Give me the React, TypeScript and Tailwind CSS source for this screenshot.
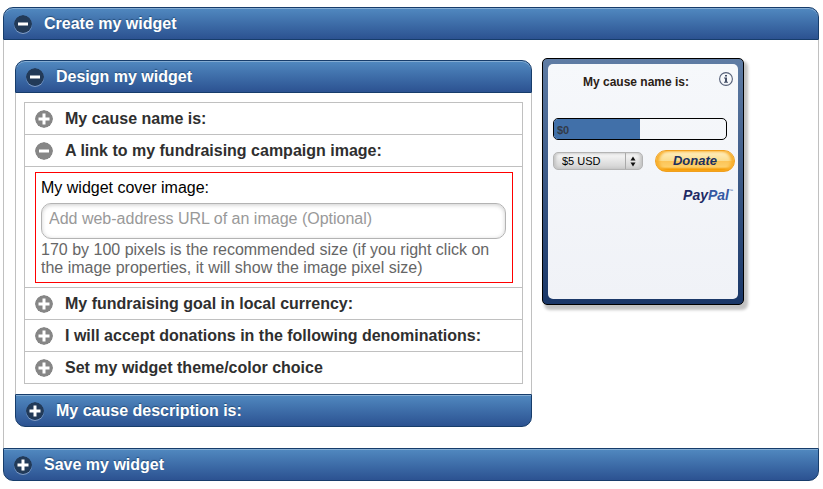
import type { ReactNode } from "react";

function ToggleIcon({ open, dark }: { open?: boolean; dark?: boolean }) {
  return (
    <svg
      viewBox="0 0 18 18"
      aria-hidden="true"
      className={`size-[18px] shrink-0 rounded-full ${
        dark ? "shadow-[0_1px_0_rgba(255,255,255,0.4)]" : ""
      }`}
    >
      <circle cx="9" cy="9" r="9" fill={dark ? "#223a58" : "#868686"} />
      <path
        d={open ? "M4 9h10" : "M3.5 9h11M9 3.5v11"}
        stroke="#fff"
        strokeWidth={3}
      />
    </svg>
  );
}

function BarHeading({
  children,
  open,
  className,
}: {
  children: ReactNode;
  open?: boolean;
  className: string;
}) {
  return (
    <h2>
      <button
        type="button"
        aria-expanded={!!open}
        className={`flex h-[33px] w-full items-center gap-3 border border-[#173d6b] bg-linear-to-b from-[#5189c0] to-[#2c5291] px-[10px] text-left text-base font-bold text-white shadow-[inset_0_1px_0_rgba(255,255,255,0.3)] [text-shadow:0_-1px_1px_#254f7a] ${className}`}
      >
        <ToggleIcon open={open} dark />
        {children}
      </button>
    </h2>
  );
}

function ListHeading({ children, open }: { children: ReactNode; open?: boolean }) {
  return (
    <h3>
      <button
        type="button"
        aria-expanded={!!open}
        className="flex h-[31px] w-full items-center gap-3 px-[10px] text-left text-base font-bold text-[#2f2f2f]"
      >
        <ToggleIcon open={open} />
        {children}
      </button>
    </h3>
  );
}

function CoverImageField() {
  return (
    <div className="py-[5px] pr-[9px] pl-[10px] pb-1">
      <div className="border border-[#f00] py-[5px] pr-[6px] pl-[5px]">
        <label htmlFor="cover" className="block h-[25px] leading-5 text-black">
          My widget cover image:
        </label>
        <input
          id="cover"
          type="url"
          placeholder="Add web-address URL of an image (Optional)"
          className="block h-[36px] w-full rounded-[10px] border border-[#b3b3b3] bg-white px-[7px] pb-1 shadow-[inset_0_1px_4px_rgba(0,0,0,0.2)] outline-none placeholder:text-[#999]"
        />
        <p className="mt-[2px] leading-[18px] text-[#666]">
          170 by 100 pixels is the recommended size (if you right click on the
          image properties, it will show the image pixel size)
        </p>
      </div>
    </div>
  );
}

function InfoIcon() {
  return (
    <svg viewBox="0 0 14 14" className="size-[14px]" fill="none" aria-hidden="true">
      <circle cx="7" cy="7" r="6.4" stroke="#566078" strokeWidth="1.1" />
      <path d="M6 3h2v1.600H6zM5 5.600h3v4.200h1v1H5v-1h1V6.600H5z" fill="#465068" />
    </svg>
  );
}

function DonationCard() {
  return (
    <section className="h-[247px] w-[202px] rounded-[5px] border border-black bg-linear-to-b from-[#5f7ca4] to-[#1a3768] p-[5px] shadow-[3px_4px_3px_1px_rgba(0,0,0,0.24)]">
      <div className="flex h-full flex-col rounded-[5px] bg-linear-to-b from-[#f6f8fb] to-[#f0f2f7] pl-[5px]">
        <div className="relative flex h-[54px] justify-center pt-[10px] pr-[19px]">
          <h3 className="text-xs leading-4 font-bold whitespace-nowrap text-[#2b2115]">
            My cause name is:
          </h3>
          <button
            type="button"
            aria-label="Information"
            className="absolute top-2 right-[5px]"
          >
            <InfoIcon />
          </button>
        </div>
        <div className="mr-[11px] h-[22px] overflow-hidden rounded-[5px] border border-black">
          <div className="flex h-full w-1/2 items-center bg-[#4170a9] pt-[3px] pl-[3px] text-[11px] font-bold text-[#333b48]">
            $0
          </div>
        </div>
        <div className="mt-[10px] mr-[3px] flex items-center justify-between">
          <div className="relative">
            <select
              aria-label="Donation amount"
              className="block h-[18px] w-[90px] appearance-none rounded-[5px] border border-[#b4b4b4] bg-linear-to-b from-[#fafafa] to-[#d0d0d0] pl-2 text-[11px] leading-4 text-black shadow-[inset_2px_0_3px_#c4c4c4,inset_-2px_0_3px_#c4c4c4]"
            >
              <option>$5 USD</option>
            </select>
            <svg
              viewBox="0 0 17 16"
              aria-hidden="true"
              className="pointer-events-none absolute top-[1px] right-[1px] h-4 w-[17px]"
            >
              <path d="M.5 0v16" stroke="#aaa" />
              <path d="M5.500 7.500l2.500-4 2.500 4zM5.500 9.500l2.500 4 2.500-4z" fill="#111" />
            </svg>
          </div>
          <button
            type="button"
            className="h-[22px] w-20 rounded-full border border-[#f0a020] bg-[linear-gradient(#fff0c4,#fbdd90_48%,#fcc558_52%,#fdcf6a_80%,#f59a00_92%)] text-[13px] leading-5 font-bold text-[#1b3160] italic shadow-[inset_3px_0_3px_#f8ae2a,inset_-3px_0_3px_#f8ae2a]"
          >
            Donate
          </button>
        </div>
        <p className="mt-[14px] flex justify-end pr-[5px] text-[14px] leading-[18px] font-bold text-[#1d2a64] italic">
          Pay<span className="text-[#3559a2]">Pal</span>
          <span className="text-[4px] leading-[10px] font-normal text-[#3559a2] not-italic">™</span>
        </p>
      </div>
    </section>
  );
}

export default function App() {
  return (
    <main className="bg-white pt-[7px] pr-1 pb-2 pl-[3px] font-['Liberation_Sans',Arial,sans-serif] text-base">
      <BarHeading open className="rounded-t-[10px]">
        Create my widget
      </BarHeading>
      <div className="flex items-start gap-[10px] border-x border-[#c0c0c0] px-[11px] pt-[18px] pb-[21px]">
        <div className="mt-[2px] min-w-0 flex-1">
          <BarHeading open className="rounded-t-[10px]">
            Design my widget
          </BarHeading>
          <div className="border-x border-[#c0c0c0] px-2 pt-[9px] pb-[10px]">
            <div className="divide-y divide-[#c0c0c0] border border-[#c0c0c0]">
              <ListHeading>My cause name is:</ListHeading>
              <ListHeading open>A link to my fundraising campaign image:</ListHeading>
              <CoverImageField />
              <ListHeading>My fundraising goal in local currency:</ListHeading>
              <ListHeading>
                I will accept donations in the following denominations:
              </ListHeading>
              <ListHeading>Set my widget theme/color choice</ListHeading>
            </div>
          </div>
          <BarHeading className="rounded-b-[10px]">My cause description is:</BarHeading>
        </div>
        <div className="w-[265px] shrink-0">
          <DonationCard />
        </div>
      </div>
      <BarHeading className="rounded-b-[10px]">Save my widget</BarHeading>
    </main>
  );
}
